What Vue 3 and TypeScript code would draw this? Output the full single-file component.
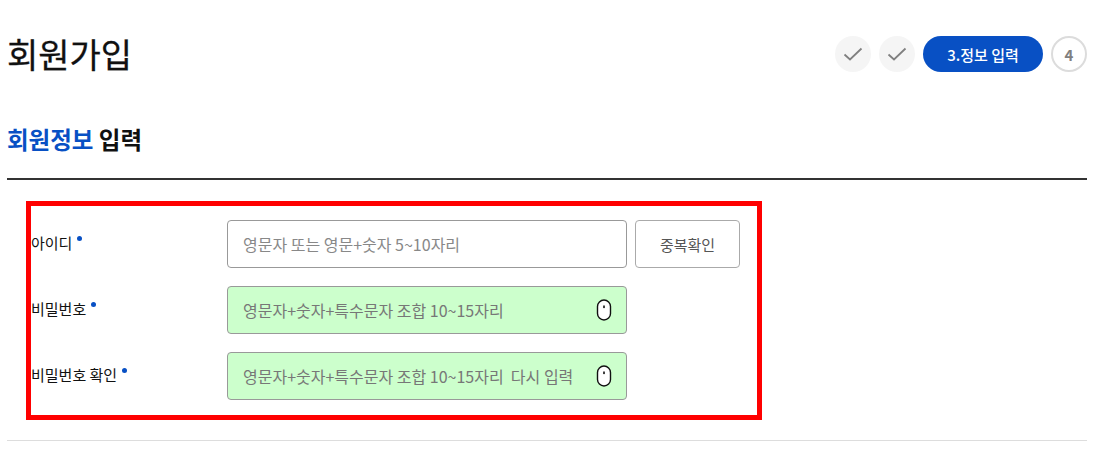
<script setup lang="ts">
interface Row { label: string; placeholder: string; filled: boolean; check: boolean }
const rows: Row[] = [
  { label: '아이디', placeholder: '영문자 또는 영문+숫자 5~10자리', filled: false, check: true },
  { label: '비밀번호', placeholder: '영문자+숫자+특수문자 조합 10~15자리', filled: true, check: false },
  { label: '비밀번호 확인', placeholder: '영문자+숫자+특수문자 조합 10~15자리  다시 입력', filled: true, check: false },
]
</script>

<template>
  <div class="page">
    <header class="head">
      <h1 class="title">회원가입</h1>
      <ol class="steps">
        <li v-for="n in 2" :key="n" class="step done">
          <svg width="20" height="16" viewBox="0 0 20 16" fill="none">
            <path d="M1.5 8.5 L7 13.5 L18.5 2.5" stroke="#808080" stroke-width="1.8" />
          </svg>
        </li>
        <li class="step active">3.정보 입력</li>
        <li class="step next">4</li>
      </ol>
    </header>
    <h2 class="section"><span class="blue">회원정보</span> 입력</h2>
    <div class="form">
      <div v-for="r in rows" :key="r.label" class="row">
        <label class="label">{{ r.label }}<i class="dot"></i></label>
        <div class="field" :class="{ filled: r.filled }">
          <input class="input" type="text" :placeholder="r.placeholder" />
          <svg v-if="r.filled" class="eye" width="16" height="22" viewBox="0 0 16 22" fill="none">
            <rect x="1.5" y="1" width="13" height="20" rx="6.5" fill="#fff" stroke="#111" stroke-width="1.4" />
            <rect x="7.2" y="6.5" width="1.6" height="2.6" fill="#111" />
          </svg>
        </div>
        <button v-if="r.check" class="check" type="button">중복확인</button>
      </div>
    </div>
    <div class="rule"></div>
  </div>
</template>

<style scoped>
.page {
  box-sizing: border-box;
  width: 1103px;
  height: 456px;
  padding: 0 16px 0 7px;
  background: #fff;
  color: #111;
  font-family: "Noto Sans CJK KR", "Noto Sans", sans-serif;
  overflow: hidden;
}
.head {
  display: flex;
  justify-content: space-between;
  align-items: center;
  padding-top: 29px;
  height: 50px;
}
.title {
  margin: 0;
  font-size: 34px;
  font-weight: 400;
  -webkit-text-stroke: 0.3px #111;
  line-height: 50px;
  color: #111;
}
.steps {
  display: flex;
  gap: 8px;
  margin: 0;
  padding: 0;
  list-style: none;
}
.step {
  box-sizing: border-box;
  display: flex;
  align-items: center;
  justify-content: center;
  width: 36px;
  height: 36px;
  border-radius: 18px;
}
.done {
  background: #f5f5f5;
}
.active {
  width: 120px;
  background: #0850c4;
  color: #fff;
  font-size: 15px;
  font-weight: 500;
}
.next {
  border: 2px solid #dcdcdc;
  color: #808080;
  font-size: 15px;
  font-weight: 700;
}
.section {
  box-sizing: border-box;
  height: 101px;
  margin: 0;
  padding-top: 43px;
  border-bottom: 2px solid #333;
  font-size: 23.5px;
  font-weight: 700;
  line-height: 34px;
}
.blue {
  color: #0850c4;
}
.form {
  box-sizing: border-box;
  display: flex;
  flex-direction: column;
  gap: 18px;
  width: 736px;
  height: 219px;
  margin: 21px 0 0 19px;
  padding: 14px 0 0;
  border: 5px solid #f00;
}
.row {
  display: flex;
  gap: 8px;
  height: 48px;
}
.label {
  flex: 0 0 188px;
  box-sizing: border-box;
  padding-top: 12px;
  font-size: 15px;
  font-weight: 400;
  line-height: 22px;
  color: #111;
}
.dot {
  display: inline-block;
  width: 5px;
  height: 5px;
  margin-left: 5px;
  border-radius: 50%;
  background: #0850c4;
  vertical-align: 8px;
}
.field {
  box-sizing: border-box;
  display: flex;
  align-items: center;
  width: 400px;
  height: 48px;
  padding: 0 14px 0 15px;
  border: 1px solid #999;
  border-radius: 4px;
  background: #fff;
}
.filled {
  background: #ccffcc;
}
.input {
  flex: 1;
  min-width: 0;
  padding: 0;
  border: 0;
  outline: 0;
  background: transparent;
  font: 400 16px "Noto Sans CJK KR", "Noto Sans", sans-serif;
  white-space: pre;
}
.input::placeholder {
  color: #888;
  opacity: 1;
}
.filled .input::placeholder {
  color: #777;
}
.eye {
  flex: none;
}
.check {
  box-sizing: border-box;
  width: 105px;
  height: 48px;
  padding: 0;
  border: 1px solid #aaa;
  border-radius: 4px;
  background: #fff;
  color: #555;
  font: 400 15px "Noto Sans CJK KR", "Noto Sans", sans-serif;
}
.rule {
  height: 1px;
  margin-top: 20px;
  background: #ddd;
}
</style>
